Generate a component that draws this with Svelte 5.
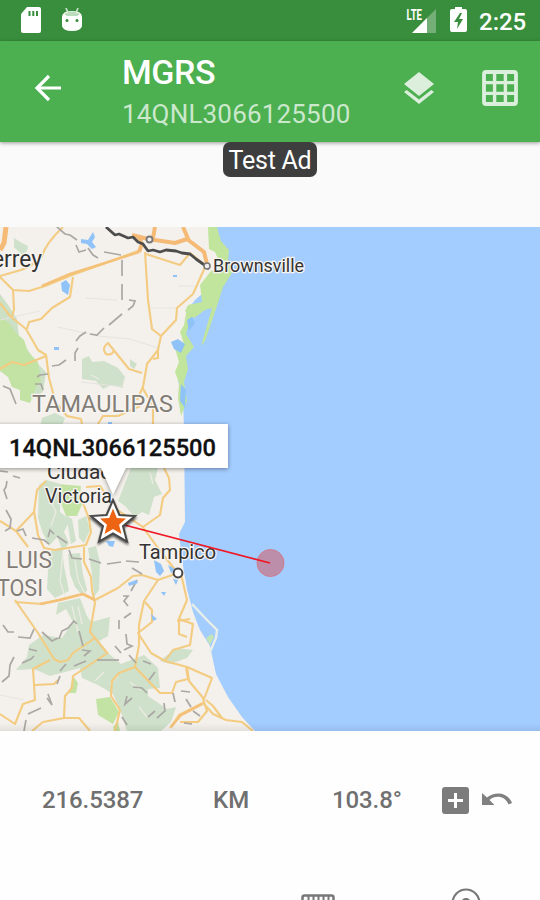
<script>
  const coordinate = '14QNL3066125500';

  const roads = [
    'M63 227 Q46 243 42 256 Q36 264 21 270 L0 276',
    'M0 277 L13 290 L29 291 L45 286 L72 275 L103 264 L138 251',
    'M13 290 L14 309 L12 317',
    'M0 303 L10 316 L26 329 L38 350 L46 355 L49 378 L52 389 L57 408',
    'M27 329 L29 322 L41 319 L52 308 L70 297 L73 277',
    'M0 369 L12 362 L24 365 L46 356',
    'M145 252 L148 300 L152 329 L161 336 L176 320 L177 308 L193 294 L206 265',
    'M146 254 L180 265 L190 253 L205 265',
    'M161 336 L158 350 L147 364 L143 387 L137 400',
    'M158 349 L158 358 L153 359',
    'M142 373 L129 369 L108 343 Q101 348 106 354 Q112 356 114 350',
    'M142 387 L153 406 L153 424',
    'M58 405 L67 416 L81 419 L83 430',
    'M98 424 L103 416 L118 416 L140 406',
    'M0 521 L16 531 L28 547 M16 531 L34 512 L37 490 L46 481',
    'M34 511 L38 535 L44 548 L55 550 L86 545 L91 532 L89 519 L82 500',
    'M86 487 L100 486 L116 509 L143 527 L160 515 L163 498 L170 490 L169 478 L164 468',
    'M142 526 L158 548 L176 571',
    'M84 547 L84 562 L91 577 L92 590 L95 603 L90 632 L108 654',
    'M15 600 L38 633 L54 659 L60 662 L68 660 L73 653 L95 638',
    'M15 602 L42 604 L82 594 L95 600 L118 588 L133 576 L142 575 L158 580 L178 573',
    'M158 580 L144 601 L139 625 L139 645 L135 667 L119 673 L112 681 L111 696 L120 710 L115 731',
    'M145 602 L152 610 L152 622 L138 633 L151 653 L165 661 L173 650 L190 645 L193 624 L179 619 L179 634 L187 637',
    'M181 574 L187 600 L178 621 L190 619',
    'M165 661 L187 667 L189 681 L204 699 L212 678 L187 667',
    'M186 667 L188 679 L176 682 L172 693 L160 693 L135 667',
    'M50 660 L33 669 L35 700 L23 704 L15 724 L0 714',
    'M35 685 L54 684 L58 680',
    'M106 654 L73 676 L72 688 L65 696 L64 718 L43 722 L32 731',
    'M64 718 L79 718 L90 731',
    'M170 728 L179 715 L203 703 L213 714 L226 720 L242 722 L253 731',
    'M203 699 L207 711 L198 722 L180 722',
    'M206 700 L213 706 L222 718'
  ];

  const greenery = [
    'M14 238 l8 5 l6 3 l-1 5 l-5 4 l-8 -8 z',
    'M82 359 l7 -3 l3 6 l12 -1 l14 7 l7 9 l-3 11 l-11 -3 l-8 4 l-7 -8 l-14 -2 z',
    'M130 359 l7 5 l-3 5 l-4 -3 z',
    'M42 418 l13 -5 l10 5 l-3 8 h-22 z',
    'M131 468 h27 l-3 12 l7 14 l-8 3 l-5 18 l-7 -3 l-7 5 l-10 -11 l-7 -5 z',
    'M39 485 L46 480 L61 484 L60 512 L70 520 L64 532 L69 543 L63 551 L57 537 L49 546 L42 531 L38 518 Z',
    'M66 515 l6 4 l4 22 l-5 3 z M78 520 l8 -4 l4 14 l-6 13 l-5 -5 z',
    'M49 552 L62 547 L64 566 L69 591 L55 598 L47 589 Z',
    'M68 554 L80 553 L83 575 L87 590 L83 596 L75 587 L70 574 Z M88 548 L96 546 L100 562 L99 590 L94 597 L92 574 Z',
    'M58 603 L80 598 L87 616 L91 622 L110 617 L108 636 L99 641 L109 654 L121 664 L144 655 L158 668 L160 688 L148 689 L148 696 L167 709 L176 707 L171 722 L161 731 L127 731 L122 715 L113 694 L98 685 L82 678 L80 668 L61 673 L50 676 L34 669 L16 670 L27 657 L29 645 L43 635 L62 638 L73 622 L66 609 L56 615 Z',
    'M160 661 l16 -13 l17 2 l-6 8 l-17 6 z'
  ];

  const boundaries = [
    'M56 226 L65 234 L70 235 L77 240', 'M76 245 L79 252 L86 250', 'M88 248 L93 255 L98 258', 'M104 252 L121 255',
    'M122 260 V276 M122 284 V300', 'M129 300 L135 301 L133 306 L128 310', 'M122 314 L109 325',
    'M104 328 L97 335 L90 334', 'M86 332 L80 336 L76 341', 'M78 348 L75 353 L75 361', 'M66 360 L59 365 L52 366',
    'M48 374 L40 375 L37 377', 'M35 384 L41 384 L43 390', 'M3 386 L10 389 L16 404', 'M0 471 L8 472', 'M13 476 L20 478', 'M7 481 L6 487 L4 490 L7 499',
    'M6 510 L11 519 L10 528 L5 531', 'M17 531 L23 529 L26 536', 'M32 538 L44 540 L49 544', 'M48 537 L50 530 L54 534', 'M57 536 L67 543',
    'M69 550 L72 558 L82 559', 'M89 559 L101 563', 'M107 564 L121 562', 'M126 561 L139 562', 'M132 568 L142 574',
    'M137 580 L131 591', 'M123 596 L128 596 L124 601 L128 606', 'M131 613 L124 618', 'M119 620 L119 629', 'M126 634 L127 644 L132 646 L124 650',
    'M115 646 L121 653', 'M129 655 L136 663', 'M143 661 L151 664', 'M155 672 L149 680', 'M3 625 L8 632 L14 632', 'M18 637 L30 638 L34 629',
    'M42 632 L52 641 L58 638', 'M59 639 L62 631 L68 628 L74 621 L77 624', 'M79 631 L83 646', 'M82 650 L90 651 L84 656', 'M97 660 L119 660',
    'M22 663 L31 659 L34 656', 'M14 657 L10 665 L9 676 L2 682', 'M29 649 L37 651', 'M66 664 L60 671', 'M74 666 L86 661',
    'M28 714 L41 708', 'M26 720 L24 731', 'M48 694 L52 705 L47 698', 'M57 684 L60 676', 'M133 687 L142 688 L147 693', 'M127 696 L125 704 L132 698',
    'M164 703 L165 711 L157 718', 'M148 717 L155 711', 'M122 717 L127 725', 'M173 693 L175 702', 'M181 691 L190 692',
    'M186 699 L191 707', 'M193 711 L200 716', 'M184 723 L192 724'
  ];
</script>

<div class="screen">
  <div class="status">
    <svg class="sd" viewBox="0 0 22 27" width="22" height="27"><path fill="#fff" d="M7 0H19Q21 0 21 2V24Q21 26 19 26H3Q1 26 1 24V7Z"/><path d="M9.5 4v5M13.3 4v5M17 4v5" stroke="#388e3c" stroke-width="2"/></svg>
    <svg class="droid" viewBox="0 0 22 25" width="22" height="25"><path d="M5 1l2 5M17 1l-2 5" stroke="#cfe6d0" stroke-width="1.6"/><path fill="#fff" d="M1 10Q1 4 11 4T21 10V19Q20 24 11 24T1 19Z"/><path fill="#b9dcba" d="M3 7Q11 2 19 7L16 9H6Z"/><circle cx="6" cy="13.5" r="1.5" fill="#388e3c"/><circle cx="16" cy="13.5" r="1.5" fill="#388e3c"/></svg>
    <svg class="signal" viewBox="0 0 32 26" width="32" height="26"><path fill="#74af77" d="M30 1V25H6Z"/><path fill="#fff" d="M21 10V25H6Z"/><path fill="#388e3c" d="M0 0h17v13H0z"/><text x="0.5" y="12" font-size="14" font-weight="700" fill="#fff" textLength="15.5" lengthAdjust="spacingAndGlyphs">LTE</text></svg>
    <svg class="battery" viewBox="0 0 18 26" width="18" height="26"><path fill="#fff" d="M5 0h7v2h3q2 0 2 2v19q0 2-2 2H2q-2 0-2-2V4q0-2 2-2h3z"/><path fill="#388e3c" d="M10 6L4 15h4l-1 7l6-10H9l3-6z"/></svg>
    <span class="time">2:25</span>
  </div>

  <header>
    <svg class="back" viewBox="0 0 28 28" width="28" height="28"><path d="M27 14H3M15 2L3 14L15 26" fill="none" stroke="#fff" stroke-width="3.2"/></svg>
    <div class="titles"><h1>MGRS</h1><p>{coordinate}</p></div>
    <svg class="layers" viewBox="0 0 32 34" width="32" height="34" fill="#dbefdc"><path d="M16 0L31 12L16 24L1 12Z"/><path d="M1 20L3.7 17.9L16 27.5L28.3 17.9L31 20L16 32Z"/></svg>
    <svg class="grid" viewBox="0 0 36 36" width="36" height="36" fill="none" stroke="#dbefdc"><rect x="2" y="2" width="32" height="32" rx="2" stroke-width="3.8"/><path d="M12.6 2V34M23.4 2V34M2 12.6H34M2 23.4H34" stroke-width="3.4"/></svg>
  </header>

  <div class="ad"><span>Test Ad</span></div>

  <svg class="map" viewBox="0 227 540 504" width="540" height="504">
    <rect y="227" width="540" height="504" fill="#a3ccff"/>
    <path fill="#f4f0eb" d="M0 227H216L219 250L221 270L207 290L196 299L187 310L184 330L185 348L179 365L178 381L183 396L184 430L185 522L179 534L182 560L187 589L193 612L200 630L210 646L216 674L228 697L242 717L255 731H0Z"/>
    <path fill="#c1e59d" d="M208 227H217L221 241L229 250L228 262L232 273L223 287L216 309L205 341L201 346L212 308L205 310L194 318L185 311L188 305L202 302L200 285L211 271L222 268L215 252L209 249Z"/>
    <path fill="#c1e59d" d="M187 308L195 313L190 321L186 334L194 347L186 356L188 369L184 382L187 401L181 416L178 398L179 383L175 372L179 362L174 345L184 344L180 332L184 325Z"/>
    <path fill="#8fc3f7" d="M171 342l7 -3l7 5l-4 9l-7 -4zM187 320l5 -3l3 6l-6 8zM181 384l5 6l-1 18l-5 -7z"/>
    <path fill="#cbe0c5" d="M0 294L8 305L17 319L19 337L36 362L46 372L43 392L32 399L20 340L0 318Z"/>
    <path fill="#c2e3a3" d="M0 318L9 323L16 333L24 340L28 352L38 362L41 382L36 387L30 403L20 400L20 390L12 387L8 377L0 371ZM58 484L81 486L80 496L83 502L77 516L66 516L60 500ZM96 699L110 697L119 712L113 724L98 715ZM113 727L118 721L120 731H114ZM73 676L78 683L76 693H69Z"/>
    <g fill="#cfe1ca">{#each greenery as d}<path {d}/>{/each}</g>
    <path fill="none" stroke="#ecebe2" stroke-width="1.3" d="M63 553L60 581L65 597M75 560L78 580L85 594M78 606L82 624M72 606L78 632M150 473L153 484M91 375l8 4M50 500l6 12l-5 14M104 672l-9 9M139 707l8 10M118 676l-8 8M130 682l10 8"/>
    <path fill="none" stroke="#e7e3e0" stroke-width="1" d="M58 327L98 336L130 339L158 348M151 308H176M178 286H194M86 298L117 300M0 320L40 311M81 382L124 387M0 695L24 700M10 440L30 460"/>
    <g fill="none" stroke="#f3cc82" stroke-width="2.1" stroke-linejoin="round">{#each roads as d}<path {d}/>{/each}</g>
    <g fill="none" stroke="#f5ba76" stroke-linejoin="round"><path stroke-width="5" d="M6 227L4 243L0 250"/><path stroke-width="4" d="M132 235L148 239L175 243L187 239L204 252L207 264M155 227L153 238M183 227L189 241M138 236L142 244L139 252"/><path stroke-width="2.6" stroke="#f4c179" d="M42 286L70 274L105 263L139 252M40 604L60 600L83 594L95 600M171 727L181 715L202 704"/></g>
    <g fill="none" stroke="#aaa7a4" stroke-width="1.7">{#each boundaries as d}<path {d}/>{/each}</g>
    <g fill="#8fc3fa"><path d="M81 239l7 1l5 -8l2 5l-3 5l4 5l-4 2l-5 -5l-6 -1zM61 283l5 -3l4 5l-2 10l-6 -4zM54 347h5v3h-5zM106 541h9l-2 6l-4 -1zM154 560l7 4l3 7l-4 5l-4 -4zM168 565l7 4l-4 4zM173 579l5 1l-2 5zM151 614l6 5l-4 2zM161 592h5l-2 4zM173 275h4v2h-4zM108 422h4v2h-4zM128 583l8 -3l2 3l-9 3z"/></g>
    <path fill="none" stroke="#e8eee9" stroke-width="2.4" d="M192 604L207 620L217 630L216 638L210 652"/>
    <path fill="#c2e4b7" d="M206 638l6 -4l2 3l-4 8z"/>
    <path d="M106 227L115 235L119 234L128 238L133 237L138 242L143 244L148 251L153 250L160 252L166 250L176 251L182 253L190 254L196 259L203 264L209 269" fill="none" stroke="#4d4d4d" stroke-width="2.8" stroke-linejoin="bevel"/>
    <circle cx="149.5" cy="239.5" r="3" fill="#eee" stroke="#777" stroke-width="1.8"/>
    <circle cx="207" cy="266" r="3" fill="#eee" stroke="#777" stroke-width="1.5"/>
    <circle cx="178" cy="573" r="4.4" fill="#fff" stroke="#444" stroke-width="2"/>

    <g class="labels">
      <text x="-8" y="267" font-size="23" textLength="50" lengthAdjust="spacingAndGlyphs">errey</text>
      <text x="213" y="272" font-size="18.5" textLength="91" lengthAdjust="spacingAndGlyphs">Brownsville</text>
      <text class="region" x="32" y="412" font-size="23" textLength="141" lengthAdjust="spacingAndGlyphs">TAMAULIPAS</text>
      <text x="47" y="479" font-size="20" textLength="65" lengthAdjust="spacingAndGlyphs">Ciudad</text>
      <text x="45" y="503" font-size="20" textLength="67" lengthAdjust="spacingAndGlyphs">Victoria</text>
      <text class="region" x="6" y="568" font-size="24" textLength="46" lengthAdjust="spacingAndGlyphs">LUIS</text>
      <text class="region" x="-3" y="596" font-size="24" textLength="46" lengthAdjust="spacingAndGlyphs">TOSI</text>
      <text x="139" y="559" font-size="21" textLength="77" lengthAdjust="spacingAndGlyphs">Tampico</text>
    </g>

    <circle cx="270.5" cy="563" r="13.5" fill="#bd8ea9" stroke="#cf7b8d" stroke-width="1"/>
    <path d="M113 522L270 563" stroke="#ef1824" stroke-width="1.8"/>
    <g class="callout"><path fill="#fff" d="M-5 424H228V468H126L113 495L101 468H-5Z"/></g>
    <text x="9" y="456" font-size="23.5" font-weight="500" fill="#111" stroke="#111" stroke-width=".3" textLength="207" lengthAdjust="spacingAndGlyphs">{coordinate}</text>
    <g class="marker" stroke-linejoin="miter">
      <path fill="#fff" stroke="#484848" stroke-width="2" d="M113 500L119.4 515L135 516L123 526.2L127 541.5L113 533.3L99 541.5L103 526.2L91 516L106.6 515Z"/>
      <path fill="#ed6412" d="M113 508.5L116.8 518L126 518.4L119 524.7L121.5 534L113 529L104.5 534L107 524.7L100 518.4L109.2 518Z"/>
    </g>
    <defs><linearGradient id="edge" x1="0" x2="0" y1="0" y2="1"><stop stop-color="#000" stop-opacity="0"/><stop offset="1" stop-color="#000" stop-opacity=".07"/></linearGradient></defs>
    <rect y="723" width="540" height="8" fill="url(#edge)"/>
  </svg>

  <div class="panel">
    <div class="measure">
      <span class="distance">216.5387</span><span class="unit">KM</span><span class="bearing">103.8°</span>
      <svg class="plus" viewBox="0 0 27 27" width="27" height="27"><rect width="27" height="27" rx="3" fill="#7c7c7c"/><path d="M13.5 6V21M6 13.5H21" stroke="#fff" stroke-width="3"/></svg>
      <svg class="undo" viewBox="0 0 32 16" width="32" height="16"><path fill="#808080" d="M1 1L6 5.5C14 -1 27 0 31 11L27.5 12.5C24 3.5 14 3 8.5 8L13.5 13H1Z"/></svg>
    </div>
    <div class="tools">
      <svg class="ruler" viewBox="0 0 34 16" width="34" height="16" fill="none" stroke="#777"><rect x="1.5" y="1.5" width="31" height="24" rx="2" stroke-width="2.5"/><path d="M7.5 2V12M12.5 2V12M17.5 2V12M22.5 2V12M27.5 2V12" stroke-width="2"/></svg>
      <svg class="target" viewBox="0 0 30 16" width="30" height="16" fill="none" stroke="#777"><circle cx="15" cy="15" r="13.5" stroke-width="2.2"/><circle cx="15" cy="15" r="4" stroke-width="2"/></svg>
    </div>
  </div>
</div>

<style>
  :global(body) { background: #fefefe; overflow: hidden; }
  .screen { width: 540px; height: 900px; overflow: hidden; display: flex; flex-direction: column; font-family: Roboto, "Liberation Sans", sans-serif; background: #fefefe; }
  svg { display: block; flex: none; }
  .status { height: 41px; flex: none; box-sizing: border-box; padding: 0 14px 0 20px; display: flex; align-items: center; background: #388e3c; }
  .droid { margin-left: 19px; margin-top: -3px; }
  .signal { margin-left: auto; }
  .battery { margin: -1px 11px 0 12px; }
  .time { width: 47px; margin-top: 2px; color: #fff; font-size: 24px; font-weight: 500; line-height: 28px; white-space: nowrap; }
  header { position: relative; z-index: 1; height: 101px; flex: none; box-sizing: border-box; padding: 0 22px 0 34px; display: flex; background: #4caf50; box-shadow: 0 1px 4px #0006; }
  .back { margin-top: 33px; }
  .titles { margin-left: 60px; padding-top: 11px; flex: 1; }
  h1 { margin: 0; font-size: 34px; line-height: 40px; font-weight: 500; color: #fff; letter-spacing: -.4px; }
  p { margin: 5px 0 0; font-size: 26px; line-height: 34px; color: #cbe8cc; letter-spacing: .18px; }
  .layers { margin: 31px 47px 0 0; }
  .grid { margin-top: 29px; }
  .ad { height: 85px; flex: none; background: #fafafa; display: flex; justify-content: center; align-items: flex-start; }
  .ad span { position: relative; z-index: 2; width: 94px; height: 35px; box-sizing: border-box; border-radius: 7px; background: #3e3e3e; color: #fff; text-align: center; font-size: 25px; line-height: 37px; letter-spacing: -.25px; white-space: nowrap; }
  .map { overflow: hidden; }
  .labels { fill: #333; stroke: #f8f5f1; stroke-width: 2.5px; paint-order: stroke; }
  .region { fill: #827d77; }
  .callout { filter: drop-shadow(0 1px 2px #0006); }
  .marker { filter: drop-shadow(0 2px 1px #0009); }
  .panel { flex: 1; min-height: 0; display: flex; flex-direction: column; justify-content: space-between; }
  .measure { padding: 54px 27px 0 42px; display: flex; align-items: center; color: #707070; font-size: 24px; line-height: 31px; font-weight: 500; }
  .distance { width: 171px; letter-spacing: -.1px; }
  .unit { width: 119px; }
  .bearing { width: 110px; letter-spacing: -.1px; }
  .undo { margin-left: 12px; margin-top: -1px; }
  .tools { height: 12px; padding: 0 59px 0 301px; display: flex; justify-content: space-between; align-items: flex-start; }
  .ruler { margin-top: 6px; }
</style>
